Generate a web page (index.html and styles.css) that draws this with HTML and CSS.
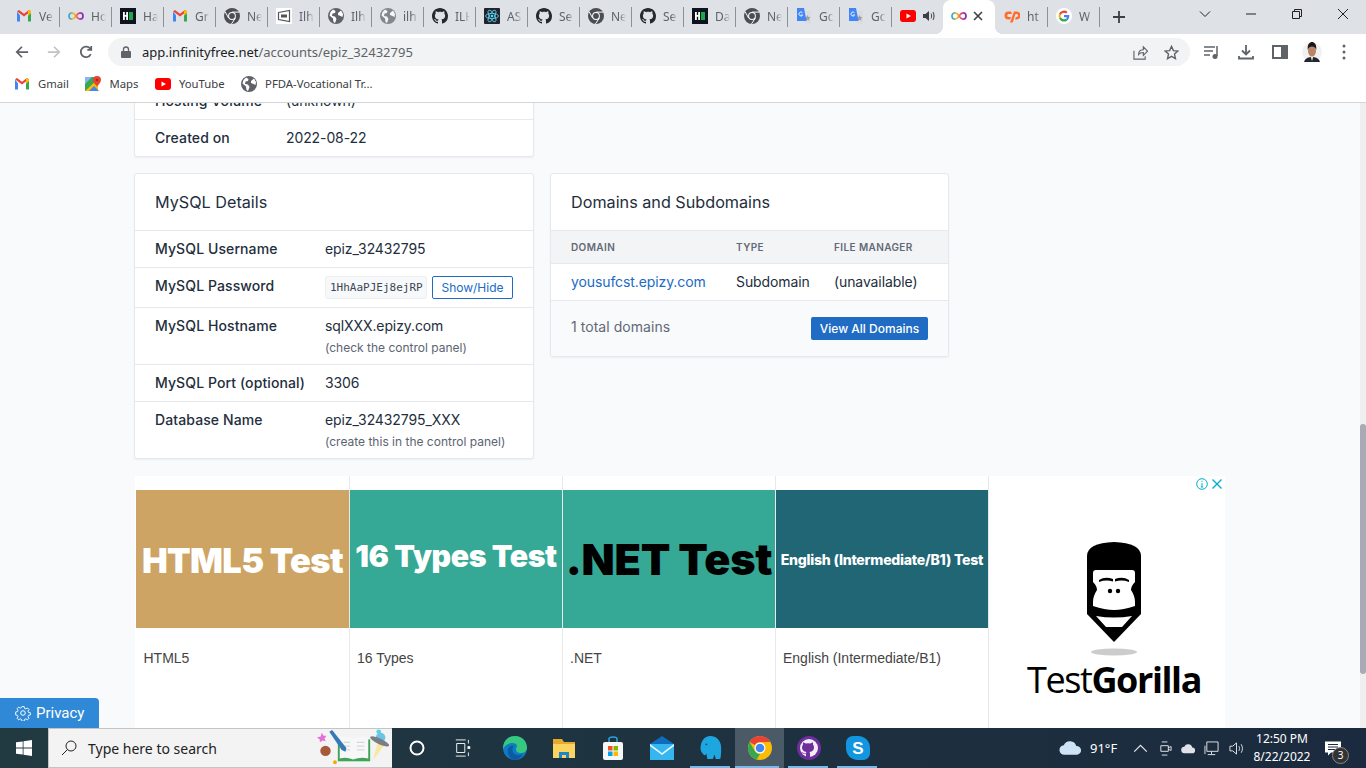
FILE: index.html
```html
<!DOCTYPE html>
<html lang="en">
<head>
    <meta charset="UTF-8">
    <meta name="viewport" content="width=device-width, initial-scale=1.0">
    <title>Account epiz_32432795</title>
    <link rel="stylesheet" href="styles.css">
</head>
<body>
    <!-- Iconos -->
    <svg class="sprite" xmlns="http://www.w3.org/2000/svg">
        <defs>
            <linearGradient id="inf" x1="0" y1="0" x2="1" y2="0">
                <stop offset="0" stop-color="#2aa8e0"/><stop offset=".35" stop-color="#f6c31c"/><stop offset=".65" stop-color="#e8457f"/><stop offset="1" stop-color="#7b2fbe"/>
            </linearGradient>
            <symbol id="gmail" viewBox="0 0 16 16">
                <path d="M1 3.500v10h3V7.200z" fill="#4285f4"/>
                <path d="M12 7.200v6.300h3v-10z" fill="#34a853"/>
                <path d="M1 3.200 8 8.600l7-5.400-2-1.200L8 5.700 3 2z" fill="#ea4335"/>
                <path d="M12 3v4.500l3-2.300V3.200L13.500 2z" fill="#fbbc04"/>
            </symbol>
            <symbol id="infinity" viewBox="0 0 16 16">
                <path d="M8 8C6.500 5.800 5.400 4.900 3.900 4.900 2.200 4.900 1 6.300 1 8s1.200 3.100 2.900 3.100C5.400 11.100 6.500 10.200 8 8c1.500-2.200 2.600-3.100 4.100-3.100C13.800 4.900 15 6.300 15 8s-1.200 3.100-2.900 3.100C10.600 11.100 9.500 10.200 8 8z" fill="none" stroke="url(#inf)" stroke-width="1.700"/>
            </symbol>
            <symbol id="hr" viewBox="0 0 16 16">
                <rect width="16" height="16" fill="#0e141e"/>
                <path d="M3 4h1.800v3h1.400V4H8v8H6.200V8.800H4.800V12H3z" fill="#fff"/>
                <rect x="9" y="4" width="4" height="8" fill="#1ba94c"/>
            </symbol>
            <symbol id="chromedark" viewBox="0 0 16 16">
                <circle cx="8" cy="8" r="8" fill="#4b4e52"/>
                <circle cx="8" cy="8" r="3.900" fill="#fff"/>
                <circle cx="8" cy="8" r="2.900" fill="#4b4e52"/>
                <path d="M8 4.100h7.200M4.600 10 1.300 4M11.400 10 7.500 15.800" stroke="#fff" stroke-width="1"/>
            </symbol>
            <symbol id="boxfav" viewBox="0 0 16 16">
                <rect width="16" height="16" fill="#fff"/>
                <path d="M2.500 4.500 13.500 2.500V13.500L2.500 11.500z" fill="none" stroke="#555" stroke-width="1.200"/>
                <rect x="5" y="6.500" width="6" height="3" fill="#555"/>
            </symbol>
            <symbol id="globe" viewBox="0 0 16 16">
                <circle cx="8" cy="8" r="8" fill="#5f6368"/>
                <path d="M5 1.500 7.500 3 7 5 4.500 5.500 4 8 7 8.500 8.500 11 7 15 5.500 14 5 10.500 1.500 7.500 2.500 4zM10 5l3-2.500L15 6l-.5 3-2-1-2.500-1z" fill="#fff"/>
            </symbol>
            <symbol id="github" viewBox="0 0 16 16">
                <path d="M8 0C3.580 0 0 3.580 0 8c0 3.540 2.290 6.530 5.470 7.590.4.07.55-.17.55-.38 0-.19-.01-.82-.01-1.490-2.010.37-2.530-.49-2.690-.94-.09-.23-.48-.94-.82-1.130-.28-.15-.68-.52-.01-.53.63-.01 1.080.58 1.230.82.72 1.210 1.870.87 2.330.66.07-.52.28-.87.51-1.070-1.780-.2-3.640-.89-3.640-3.950 0-.87.31-1.590.82-2.150-.08-.2-.36-1.020.08-2.120 0 0 .67-.21 2.200.82.64-.18 1.320-.27 2-.27.68 0 1.360.09 2 .27 1.530-1.040 2.200-.82 2.200-.82.44 1.100.16 1.920.08 2.120.51.56.82 1.270.82 2.150 0 3.070-1.870 3.750-3.650 3.950.29.25.54.73.54 1.480 0 1.070-.01 1.930-.01 2.200 0 .21.15.46.55.38A8.013 8.013 0 0016 8c0-4.420-3.580-8-8-8z" fill="#24292f"/>
            </symbol>
            <symbol id="react" viewBox="0 0 16 16">
                <rect width="16" height="16" rx="1" fill="#20232a"/>
                <g fill="none" stroke="#61dafb" stroke-width=".8">
                    <ellipse cx="8" cy="8" rx="6.500" ry="2.600"/>
                    <ellipse cx="8" cy="8" rx="6.500" ry="2.600" transform="rotate(60 8 8)"/>
                    <ellipse cx="8" cy="8" rx="6.500" ry="2.600" transform="rotate(120 8 8)"/>
                </g>
                <circle cx="8" cy="8" r="1.300" fill="#61dafb"/>
            </symbol>
            <symbol id="translate" viewBox="0 0 16 16">
                <path d="M8 3h7v12.500H9z" fill="#dadce0"/>
                <path d="M11.500 7l1 2 2 .3-1.500 1.400.4 2-1.900-1-1.900 1 .4-2L8.500 9.300l2-.3z" fill="#9aa0a6"/>
                <path d="M1 0h7l2.500 13H1z" fill="#4285f4"/>
                <path d="M6.500 4.700A2 2 0 1 0 6.700 7H4.800" fill="none" stroke="#fff" stroke-width=".9"/>
            </symbol>
            <symbol id="youtube" viewBox="0 0 16 12">
                <rect width="16" height="12" rx="3" fill="#f00"/>
                <path d="M6.500 3.500 11 6 6.500 8.500z" fill="#fff"/>
            </symbol>
            <symbol id="speaker" viewBox="0 0 12 12">
                <path d="M0 4h2.500L6 1v10L2.500 8H0z" fill="#3c4043"/>
                <path d="M8 3.500c.9 1.500.9 3.500 0 5M10 2c1.400 2.500 1.400 5.500 0 8" fill="none" stroke="#3c4043"/>
            </symbol>
            <symbol id="cpanel" viewBox="0 0 16 16">
                <path d="M7 3.500H4.500a4 4 0 0 0 0 8H6l1.200-2.500h-2.500a1.500 1.500 0 0 1 0-3H8z" fill="#ff6c2c"/>
                <path d="M6 14.500 10 3.500h2.500a4 4 0 0 1 0 8h-1.500l1-2.500h.6a1.500 1.500 0 0 0 0-3H11.500L8.700 14.500z" fill="#ff6c2c"/>
            </symbol>
            <symbol id="google" viewBox="0 0 16 16">
                <circle cx="8" cy="8" r="8" fill="#fff"/>
                <path d="M13.300 8.100c0-.4 0-.8-.1-1.100H8v2.200h3a2.600 2.600 0 0 1-1.100 1.700l1.700 1.400c1-1 1.700-2.400 1.700-4.200z" fill="#4285f4"/>
                <path d="M8 13.500c1.500 0 2.700-.5 3.600-1.300l-1.700-1.400c-.5.3-1.100.5-1.900.5-1.400 0-2.700-1-3.100-2.300l-1.800 1.400A5.500 5.500 0 0 0 8 13.500z" fill="#34a853"/>
                <path d="M4.900 9a3.300 3.300 0 0 1 0-2.100L3.100 5.500a5.500 5.500 0 0 0 0 4.900z" fill="#fbbc04"/>
                <path d="M8 4.700c.8 0 1.500.3 2.100.8l1.500-1.500A5.500 5.500 0 0 0 3.100 5.500l1.800 1.400C5.300 5.600 6.600 4.700 8 4.700z" fill="#ea4335"/>
            </symbol>
            <symbol id="maps" viewBox="0 0 16 16">
                <rect y="1" width="13" height="14" fill="#34a853"/>
                <path d="M0 15 13 3v12z" fill="#fbbc04"/>
                <path d="M0 1h7L0 8z" fill="#8ab4f8"/>
                <path d="M4 15 9 10l5 5z" fill="#4285f4"/>
                <path d="M12 0a4 4 0 0 0-4 4c0 2.500 4 6.500 4 6.500s4-4 4-6.500a4 4 0 0 0-4-4z" fill="#ea4335"/>
                <circle cx="12" cy="4" r="1.300" fill="#a52714"/>
            </symbol>
            <symbol id="chrome" viewBox="0 0 24 24">
                <circle cx="12" cy="12" r="12" fill="#fbbc04"/>
                <path d="M12 0a12 12 0 0 1 10.400 6H12a6 6 0 0 0-5.200 3L1.600 6A12 12 0 0 1 12 0z" fill="#ea4335"/>
                <path d="M1.600 6 6.800 15a6 6 0 0 0 5.200 3l-3.400 5.500A12 12 0 0 1 1.600 6z" fill="#34a853"/>
                <circle cx="12" cy="12" r="5.500" fill="#fff"/>
                <circle cx="12" cy="12" r="4.300" fill="#4285f4"/>
            </symbol>
        </defs>
    </svg>

    <div class="tabstrip">
        <div class="tab"><svg class="favicon"><use href="#gmail"/></svg><span class="tab-title">Ve</span></div>
        <div class="tab"><svg class="favicon"><use href="#infinity"/></svg><span class="tab-title">Ho</span></div>
        <div class="tab"><svg class="favicon"><use href="#hr"/></svg><span class="tab-title">Ha</span></div>
        <div class="tab"><svg class="favicon"><use href="#gmail"/></svg><span class="tab-title">Gr</span></div>
        <div class="tab"><svg class="favicon"><use href="#chromedark"/></svg><span class="tab-title">Ne</span></div>
        <div class="tab"><svg class="favicon"><use href="#boxfav"/></svg><span class="tab-title">Ilh</span></div>
        <div class="tab"><svg class="favicon"><use href="#globe"/></svg><span class="tab-title">Ilh</span></div>
        <div class="tab"><svg class="favicon faded"><use href="#globe"/></svg><span class="tab-title">ilh</span></div>
        <div class="tab"><svg class="favicon"><use href="#github"/></svg><span class="tab-title">ILH</span></div>
        <div class="tab"><svg class="favicon"><use href="#react"/></svg><span class="tab-title">AS</span></div>
        <div class="tab"><svg class="favicon"><use href="#github"/></svg><span class="tab-title">Se</span></div>
        <div class="tab"><svg class="favicon"><use href="#chromedark"/></svg><span class="tab-title">Ne</span></div>
        <div class="tab"><svg class="favicon"><use href="#github"/></svg><span class="tab-title">Se</span></div>
        <div class="tab"><svg class="favicon"><use href="#hr"/></svg><span class="tab-title">Da</span></div>
        <div class="tab"><svg class="favicon"><use href="#chromedark"/></svg><span class="tab-title">Ne</span></div>
        <div class="tab"><svg class="favicon"><use href="#translate"/></svg><span class="tab-title">Gc</span></div>
        <div class="tab"><svg class="favicon"><use href="#translate"/></svg><span class="tab-title">Gc</span></div>
        <div class="tab tab-audio"><svg class="favicon"><use href="#youtube"/></svg><svg class="tab-speaker"><use href="#speaker"/></svg></div>
        <div class="tab tab-active"><svg class="favicon"><use href="#infinity"/></svg>
            <svg class="tab-close" viewBox="0 0 10 10"><path d="M1 1l8 8M9 1l-8 8"/></svg>
        </div>
        <div class="tab"><svg class="favicon"><use href="#cpanel"/></svg><span class="tab-title">ht</span></div>
        <div class="tab"><svg class="favicon"><use href="#google"/></svg><span class="tab-title">W</span></div>
        <svg class="new-tab" viewBox="0 0 14 14"><path d="M7 1v12M1 7h12"/></svg>
        <div class="window-controls">
            <svg class="win-icon" viewBox="0 0 12 12"><path d="M1 3.500 6 8.500l5-5"/></svg>
            <svg class="win-icon" viewBox="0 0 12 12"><path d="M1 6h10"/></svg>
            <svg class="win-icon" viewBox="0 0 12 12"><path d="M1.500 3.500h7v7h-7zM3.500 3.500v-2h7v7h-2"/></svg>
            <svg class="win-icon" viewBox="0 0 12 12"><path d="M1 1l10 10M11 1 1 11"/></svg>
        </div>
    </div>

    <div class="toolbar">
        <svg class="nav-icon" viewBox="0 0 16 16"><path d="M15 8H2M8 2 2 8l6 6"/></svg>
        <svg class="nav-icon nav-disabled" viewBox="0 0 16 16"><path d="M1 8h13M8 2l6 6-6 6"/></svg>
        <svg class="nav-icon" viewBox="0 0 16 16"><path d="M13.500 10.500A6 6 0 1 1 13 4.500M14 1v4.500H9.500"/></svg>
        <div class="omnibox">
            <svg class="lock" viewBox="0 0 10 12"><path d="M2.500 5V3.500a2.500 2.500 0 0 1 5 0V5" fill="none" stroke="#5f6368" stroke-width="1.300"/><rect y="5" width="10" height="7" rx="1" fill="#5f6368"/></svg>
            <span class="url"><b>app.infinityfree.net</b>/accounts/epiz_32432795</span>
            <svg class="omni-icon share" viewBox="0 0 16 16"><path d="M1 6v9h12v-3M6 10c0-3 2-5 5-5V2l4.500 4.500L11 11V8c-2 0-4 .5-5 2z"/></svg>
            <svg class="omni-icon" viewBox="0 0 16 16"><path d="M8 1.500l2 4.500 4.800.5-3.600 3.200 1 4.800L8 12.100l-4.200 2.400 1-4.800L1.200 6.500 6 6z" stroke-width="1.500"/></svg>
        </div>
        <div class="toolbar-actions">
            <svg class="tool-icon" viewBox="0 0 16 16"><path d="M0 3h11M0 7h9M0 11h6M13 2v10" fill="none" stroke="#5f6368" stroke-width="1.500"/><circle cx="11" cy="12.500" r="2.500" fill="#5f6368"/></svg>
            <svg class="tool-icon" viewBox="0 0 16 16"><path d="M8 1v9M4 6.500 8 10.500l4-4M1 12v2.500h14V12" fill="none" stroke="#5f6368" stroke-width="1.800"/></svg>
            <svg class="tool-icon" viewBox="0 0 16 16"><path d="M1 2h14v12H1z" fill="none" stroke="#5f6368" stroke-width="2"/><rect x="9" y="2" width="6" height="12" fill="#5f6368"/></svg>
            <svg class="avatar" viewBox="0 0 20 20">
                <circle cx="10" cy="10" r="10" fill="#f1f1f1"/>
                <path d="M2 20c1-4 5-5 8-5s7 1 8 5z" fill="#23262b"/>
                <path d="M8.500 14h3l-1.500 5z" fill="#eee"/>
                <ellipse cx="10" cy="9" rx="4" ry="5.500" fill="#b98565"/>
                <path d="M5.800 8C5 2 8 0 10 0s5 2 4.200 8C13.500 5 12 4.500 10 4.500S6.500 5 5.800 8z" fill="#17181b"/>
            </svg>
            <svg class="kebab" viewBox="0 0 4 16"><circle cx="2" cy="2" r="1.500"/><circle cx="2" cy="8" r="1.500"/><circle cx="2" cy="14" r="1.500"/></svg>
        </div>
    </div>

    <div class="bookmarks">
        <div class="bookmark"><svg class="favicon"><use href="#gmail"/></svg>Gmail</div>
        <div class="bookmark"><svg class="favicon"><use href="#maps"/></svg>Maps</div>
        <div class="bookmark"><svg class="favicon"><use href="#youtube"/></svg>YouTube</div>
        <div class="bookmark"><svg class="favicon"><use href="#globe"/></svg>PFDA-Vocational Tr...</div>
    </div>

    <main class="page">
        <div class="content">
            <div class="card card-account">
                <div class="row row-account"><span class="label">Hosting Volume</span><span>(unknown)</span></div>
                <div class="row row-account"><span class="label">Created on</span><span>2022-08-22</span></div>
            </div>

            <div class="columns">
                <div class="card">
                    <h3 class="card-title">MySQL Details</h3>
                    <div class="row row-mysql"><span class="label">MySQL Username</span><span>epiz_32432795</span></div>
                    <div class="row row-mysql row-password">
                        <span class="label">MySQL Password</span>
                        <span class="secret"><code class="code">1HhAaPJEj8ejRP</code><button class="btn-outline">Show/Hide</button></span>
                    </div>
                    <div class="row row-mysql row-hint"><span class="label">MySQL Hostname</span><div>sqlXXX.epizy.com<small class="hint">(check the control panel)</small></div></div>
                    <div class="row row-mysql"><span class="label">MySQL Port (optional)</span><span>3306</span></div>
                    <div class="row row-mysql row-hint"><span class="label">Database Name</span><div>epiz_32432795_XXX<small class="hint">(create this in the control panel)</small></div></div>
                </div>

                <div class="card card-domains">
                    <h3 class="card-title">Domains and Subdomains</h3>
                    <div class="domain-grid domain-head"><span>Domain</span><span>Type</span><span>File Manager</span></div>
                    <div class="domain-grid domain-row"><a class="link">yousufcst.epizy.com</a><span>Subdomain</span><span>(unavailable)</span></div>
                    <div class="card-footer"><span class="muted">1 total domains</span><button class="btn-primary">View All Domains</button></div>
                </div>
            </div>

            <div class="ad">
                <div class="ad-card"><div class="ad-img ad-html">HTML5 Test</div><p class="ad-caption">HTML5</p></div>
                <div class="ad-card"><div class="ad-img ad-types">16 Types Test</div><p class="ad-caption">16 Types</p></div>
                <div class="ad-card"><div class="ad-img ad-net">.NET Test</div><p class="ad-caption">.NET</p></div>
                <div class="ad-card"><div class="ad-img ad-english">English (Intermediate/B1) Test</div><p class="ad-caption">English (Intermediate/B1)</p></div>
                <div class="ad-brand">
                    <div class="ad-marks">
                        <svg class="ad-mark" viewBox="0 0 12 12"><circle cx="6" cy="6" r="5.300"/><path d="M6 5v4M6 2.800v1.200M4.800 9h2.400"/></svg>
                        <svg class="ad-mark" viewBox="0 0 12 12"><path d="M1.500 1.500l9 9M10.500 1.500l-9 9" stroke-width="1.400"/></svg>
                    </div>
                    <svg class="gorilla" viewBox="0 0 54 116">
                        <path d="M0 14Q0 1 27 0q27 1 27 14v58L27 100 0 72z" fill="#000"/>
                        <path d="M9 28H45Q48 28 48 31V40Q44 44 44 48 48 54 48 60V64Q36 68 27 68 18 68 6 64V60Q6 54 10 48 10 44 6 40V31Q6 28 9 28z" fill="#fff"/>
                        <path d="M12 38q6-4 14-1l0 2.500q-7-2-14 .5zM42 38q-6-4-14-1l0 2.500q7-2 14 .5z" fill="#000"/>
                        <circle cx="23" cy="49" r="2.200" fill="#000"/><circle cx="31" cy="49" r="2.200" fill="#000"/>
                        <path d="M9 74q18 3 36 0L35 85H19z" fill="#fff"/>
                        <ellipse cx="27" cy="110" rx="23" ry="3.500" fill="#ccc"/>
                    </svg>
                    <div class="brand-name">Test<b>Gorilla</b></div>
                </div>
            </div>
        </div>
        <div class="scrollbar"><div class="scroll-thumb"></div></div>
        <div class="privacy">
            <svg class="privacy-icon" viewBox="0 0 16 16"><circle cx="8" cy="8" r="2.300"/><path d="M6.800 1h2.400l.4 2 1.400.6 1.700-1.100 1.700 1.700-1.100 1.700.6 1.400 2 .4v2.400l-2 .4-.6 1.400 1.100 1.700-1.700 1.700-1.700-1.100-1.400.6-.4 2H6.800l-.4-2-1.400-.6-1.700 1.100-1.700-1.700 1.100-1.700-.6-1.400-2-.4V6.800l2-.4.6-1.400L1.600 3.300 3.300 1.600 5 2.700 6.400 2z" transform="translate(.6 .6) scale(.93)"/></svg>
            Privacy
        </div>
    </main>

    <footer class="taskbar">
        <div class="start">
            <svg class="win-logo" viewBox="0 0 16 16"><path d="M0 2.300 6.700 1.400V7.600H0zM7.500 1.300 16 0V7.600H7.500zM0 8.400H6.700V14.600L0 13.700zM7.500 8.400H16V16L7.500 14.700z" fill="#fff"/></svg>
        </div>
        <div class="search">
            <svg class="search-icon" viewBox="0 0 16 16"><circle cx="10" cy="6" r="5"/><path d="M6.500 9.500 1 15"/></svg>
            <span>Type here to search</span>
            <svg class="doodle" viewBox="0 0 76 40">
                <path d="M4 4l2 3 3 0-2 3 1 3-3-1-3 2 0-3-3-2 4-1z" fill="#e46fd8"/>
                <circle cx="8" cy="23" r="5.500" fill="#a65a3a"/>
                <circle cx="18" cy="35" r="2" fill="#f5a800"/>
                <circle cx="64" cy="3" r="2.500" fill="#5bd0e0"/>
                <rect x="21" y="11" width="34" height="23" fill="#3fa45a"/>
                <path d="M23 9q7-2 14 1v22q-7-3-14-1zM37 10q8-3 16-1v22q-8-2-16 1z" fill="#f7f7f7"/>
                <path d="M27 14h7M27 18h7M27 22h7M41 14h8M41 18h8M41 22h8" stroke="#c8cdd6"/>
                <path d="M12 3l3-2 15 19-1 4-4-2z" fill="#3679b8"/>
                <path d="M58 33l5-19 7 3z" fill="#f7e8a0"/>
                <circle cx="66" cy="9" r="5" fill="#69c4e8"/>
                <ellipse cx="65" cy="13" rx="11" ry="3" transform="rotate(25 65 13)" fill="#7a7f86"/>
            </svg>
        </div>
        <div class="task-apps">
            <div class="app"><svg class="cortana" viewBox="0 0 16 16"><circle cx="8" cy="8" r="6.500"/></svg></div>
            <div class="app"><svg class="taskview" viewBox="0 0 20 20"><path d="M2 1h11M2 19h11M3 5h9v10H3zM16 1v4M16 15v4"/><rect x="15" y="8" width="3" height="3" fill="#fff" stroke="none"/></svg></div>
            <div class="app">
                <svg class="app-icon" viewBox="0 0 24 24">
                    <circle cx="12" cy="12" r="12" fill="#0f7bc4"/>
                    <path d="M24 12c0 3-3 5-6 5-4 0-5-2-5-4 0-1.500 1-2 1-3 0-2-2-3-5-3-3.500 0-8 3-9 6C0 5 5 0 12 0s12 5 12 12z" fill="#37c77f"/>
                    <path d="M5 13c1-3 4-4 6-3-3 2-2 9 4 9 2 0 4-.5 5-1.500C18 22 15 24 12 24c-5 0-8-6-7-11z" fill="#0c59a4"/>
                </svg>
            </div>
            <div class="app">
                <svg class="app-icon" viewBox="0 0 24 24">
                    <path d="M1 3h9l2 3h11v3H1z" fill="#e8a92f"/><path d="M1 8h22v14H1z" fill="#fbd560"/>
                    <path d="M7 22v-6h10v6h-3v-3h-4v3z" fill="#1e86c8"/>
                </svg>
            </div>
            <div class="app">
                <svg class="app-icon" viewBox="0 0 24 24">
                    <path d="M8 6V3q0-2 4-2t4 2v3" fill="none" stroke="#2aa8e0" stroke-width="1.500"/>
                    <rect x="2" y="6" width="20" height="18" rx="2" fill="#f7f7f7"/>
                    <rect x="7" y="10" width="4.500" height="4.500" fill="#f25022"/><rect x="12.500" y="10" width="4.500" height="4.500" fill="#7fba00"/>
                    <rect x="7" y="15.500" width="4.500" height="4.500" fill="#00a4ef"/><rect x="12.500" y="15.500" width="4.500" height="4.500" fill="#ffb900"/>
                </svg>
            </div>
            <div class="app">
                <svg class="app-icon" viewBox="0 0 24 24">
                    <path d="M12 0 24 8H0z" fill="#0f6cbd"/><rect y="8" width="24" height="16" fill="#35b6ee"/>
                    <path d="M0 8l12 9 12-9v2L12 19 0 10z" fill="#e8f7fd"/>
                </svg>
            </div>
            <div class="app app-open">
                <svg class="app-icon" viewBox="0 0 24 26">
                    <path d="M11 0c7 0 12 5 12 13 0 5 0 8-1 12h-5l-1-5-2 5H8l-1-6c-1 3-3 2-4 0-2-2-3-5-2-9C2 4 6 0 11 0z" fill="#1da6e0"/>
                    <circle cx="7" cy="9" r="1" fill="#0a4f75"/>
                </svg>
            </div>
            <div class="app app-active"><svg class="app-icon" viewBox="0 0 24 24"><use href="#chrome"/></svg></div>
            <div class="app app-open">
                <svg class="app-icon" viewBox="0 0 24 24">
                    <circle cx="12" cy="12" r="12" fill="#6e2e9c"/>
                    <circle cx="12" cy="12" r="9" fill="#f3edf7"/>
                    <path d="M9 21v-3c-3 .5-4-1-4.500-2 1 0 1.500 1 2.500 1.500.7.3 1.500 0 2-.3 0-.5.3-1 .5-1.200-3-.5-4.500-2-4.500-4.500 0-1.200.4-2 1-2.700-.2-.8-.1-1.800.2-2.300 1 0 2 .7 2.600 1.100a8 8 0 0 1 4.400 0c.6-.4 1.600-1.100 2.600-1.100.3.5.4 1.500.2 2.300.6.700 1 1.500 1 2.700 0 2.500-1.500 4-4.500 4.500.4.400.5 1 .5 1.700V21z" fill="#6e2e9c"/>
                </svg>
            </div>
            <div class="app app-open">
                <svg class="app-icon" viewBox="0 0 24 24">
                    <path d="M7 0h5c7 0 12 5 12 12v5c0 4-3 7-7 7h-5C5 24 0 19 0 12V7c0-4 3-7 7-7z" fill="#1296e0"/>
                    <text class="skype-s" x="12" y="18" text-anchor="middle">S</text>
                </svg>
            </div>
        </div>
        <div class="tray">
            <svg class="weather" viewBox="0 0 24 16"><path d="M6 15a5 5 0 0 1-1-10 7 7 0 0 1 13 1 4.500 4.500 0 0 1 1 9z" fill="#cfe3f7"/></svg>
            <span class="temp">91°F</span>
            <svg class="tray-icon chev" viewBox="0 0 12 12"><path d="M1 8.500 6 3.500l5 5"/></svg>
            <svg class="tray-icon" viewBox="0 0 14 16"><path d="M3 1h6M3 15h6M2 5h8v6H2zM10 7l3-1v4l-3-1"/></svg>
            <svg class="tray-icon" viewBox="0 0 16 12"><path d="M4 11a3.500 3.500 0 0 1-.5-7 4.500 4.500 0 0 1 8.500 1 3 3 0 0 1 0 6z" fill="#dfe3e8" stroke="none"/></svg>
            <svg class="tray-icon tray-net" viewBox="0 0 16 16"><path d="M3 1h12v10H3zM1 5v9M8 11v3M4 14.500h8"/></svg>
            <svg class="tray-icon" viewBox="0 0 16 16"><path d="M1 5.500h3L8 2v12L4 10.500H1zM10.500 5.500c1 1.500 1 3.500 0 5M13 3.500c1.800 3 1.800 6 0 9"/></svg>
            <div class="clock"><span>12:50 PM</span><span>8/22/2022</span></div>
            <div class="notify">
                <svg class="notify-icon" viewBox="0 0 16 14"><path d="M0 0h16v11H6l-3 3v-3H0z" fill="#fff"/><path d="M3 3h10M3 5.500h10M3 8h7" stroke="#1c2a3d"/></svg>
                <span class="badge">3</span>
            </div>
        </div>
    </footer>
</body>
</html>
```
FILE: styles.css
```css
/* Estilos generales */
* {
    margin: 0;
    padding: 0;
    box-sizing: border-box;
}

body {
    font-family: 'Inter', sans-serif;
    color: #232e3c;
    display: flex;
    flex-direction: column;
    height: 100vh;
    overflow: hidden;
    background-color: #fff;
}

.sprite {
    position: absolute;
    width: 0;
    height: 0;
}

.favicon {
    width: 16px;
    height: 16px;
    flex-shrink: 0;
}

.faded {
    opacity: 0.7;
}

/* Pestañas */
.tabstrip {
    display: flex;
    height: 34px;
    padding-left: 8px;
    background-color: #dee1e6;
    font-family: 'Noto Sans', sans-serif;
    font-size: 12px;
    color: #5f6368;
}

.tab {
    position: relative;
    display: flex;
    align-items: center;
    gap: 7px;
    width: 52px;
    padding: 0 0 2px 8px;
}

.tab::after {
    content: "";
    position: absolute;
    right: 0;
    top: 7px;
    height: 20px;
    width: 1px;
    background-color: #8e9296;
}

.tab-title {
    width: 15px;
    overflow: hidden;
    white-space: nowrap;
    -webkit-mask-image: linear-gradient(to right, #000 55%, transparent);
    mask-image: linear-gradient(to right, #000 55%, transparent);
}

.tab-speaker {
    width: 12px;
    height: 12px;
}

.tab-audio::after {
    display: none;
}

.tab-active {
    background-color: #fff;
    border-radius: 8px 8px 0 0;
    margin-left: -1px;
    margin-right: 1px;
    padding-left: 8px;
    gap: 6px;
}

.tab-active::before,
.tab-active::after {
    content: "";
    position: absolute;
    top: auto;
    bottom: 0;
    width: 8px;
    height: 8px;
}

.tab-active::before {
    left: -8px;
    background: radial-gradient(circle at 0 0, transparent 8px, #fff 8px);
}

.tab-active::after {
    right: -8px;
    background: radial-gradient(circle at 100% 0, transparent 8px, #fff 8px);
}

.tab-close {
    width: 10px;
    height: 10px;
    fill: none;
    stroke: #3c4043;
    stroke-width: 1.6;
}

.new-tab {
    width: 14px;
    height: 14px;
    margin: 10px 0 0 12px;
    fill: none;
    stroke: #3c4043;
    stroke-width: 1.8;
}

.window-controls {
    display: flex;
    margin-left: auto;
    gap: 34px;
    padding: 8px 17px 0 0;
}

.win-icon {
    width: 12px;
    height: 12px;
    fill: none;
    stroke: #222;
}

/* Barra de direcciones */
.toolbar {
    display: flex;
    align-items: center;
    height: 34px;
    padding: 2px 0 0 15px;
    gap: 18px;
    background-color: #fff;
}

.nav-icon {
    width: 14px;
    height: 14px;
    fill: none;
    stroke: #5f6368;
    stroke-width: 2;
}

.nav-disabled {
    stroke: #c1c3c6;
}

.omnibox {
    display: flex;
    align-items: center;
    width: 1082px;
    height: 28px;
    margin-left: -3px;
    padding: 0 11px 0 13px;
    gap: 11px;
    border-radius: 14px;
    background-color: #f1f3f4;
}

.lock {
    width: 10px;
    height: 12px;
}

.url {
    flex: 1;
    font-family: 'Noto Sans', sans-serif;
    font-size: 13px;
    color: #5f6368;
}

.url b {
    font-weight: 400;
    color: #202124;
}

.omni-icon {
    width: 15px;
    height: 15px;
    fill: none;
    stroke: #5f6368;
    stroke-width: 1.2;
}

.share {
    margin-right: 5px;
}

.toolbar-actions {
    display: flex;
    align-items: center;
    gap: 18px;
    margin-left: -4px;
}

.tool-icon {
    width: 16px;
    height: 16px;
}

.avatar {
    width: 20px;
    height: 20px;
    margin-left: -4px;
}

.kebab {
    width: 4px;
    height: 16px;
    margin-left: 2px;
    fill: #5f6368;
}

/* Marcadores */
.bookmarks {
    display: flex;
    align-items: center;
    height: 35px;
    padding: 0 0 3px 14px;
    gap: 16.5px;
    font-family: 'Noto Sans', sans-serif;
    font-size: 11.3px;
    color: #3c4043;
    border-bottom: 1px solid #d4d5d7;
    background-color: #fff;
}

.bookmark {
    display: flex;
    align-items: center;
    gap: 8px;
}

/* Página */
.page {
    position: relative;
    flex: 1;
    overflow: hidden;
    background-color: #f9fafc;
    font-size: 14px;
    line-height: 17px;
    letter-spacing: -0.1px;
}

.content {
    width: 1091px;
    margin: -21px 0 0 134px;
}

.card {
    background-color: #fff;
    border: 1px solid #e6e8eb;
    border-radius: 3px;
    box-shadow: 0 1px 2px rgba(35, 46, 60, 0.06);
    overflow: hidden;
}

.card-account {
    width: 400px;
    margin-bottom: 16px;
}

.columns {
    display: grid;
    grid-template-columns: 400px 399px;
    align-items: start;
    gap: 16px;
    margin-bottom: 17px;
}

.card-title {
    height: 57px;
    padding: 19px 20px 0;
    font-size: 16.2px;
    line-height: 18px;
    font-weight: 400;
    letter-spacing: 0;
    color: #232e3c;
    border-bottom: 1px solid #e6e8eb;
}

.row {
    display: grid;
    padding: 9px 20px 10px;
    border-bottom: 1px solid #e6e8eb;
}

.row:last-child {
    border-bottom: none;
}

.row-account {
    grid-template-columns: 131px 1fr;
}

.row-mysql {
    grid-template-columns: 170px 1fr;
}

.row-password {
    padding: 8px 20px;
    align-items: start;
}

.row-password .label {
    padding-top: 1px;
}

.row-hint {
    padding-bottom: 8px;
}

.label {
    font-weight: 500;
    letter-spacing: 0.1px;
}

.hint {
    display: block;
    margin-top: 6px;
    font-size: 12px;
    line-height: 16px;
    letter-spacing: 0;
    color: #5b6472;
}

.secret {
    display: flex;
    gap: 5px;
}

.code {
    display: inline-block;
    width: 102px;
    height: 23px;
    padding: 0 4px;
    font-family: 'DejaVu Sans Mono', monospace;
    font-size: 11px;
    line-height: 22px;
    letter-spacing: 0;
    white-space: nowrap;
    color: #3d4654;
    background-color: #f6f8f9;
    border: 1px solid #eceef0;
    border-radius: 3px;
}

.btn-outline {
    width: 81px;
    height: 23px;
    font-family: inherit;
    font-size: 12px;
    color: #206bc4;
    background-color: #fff;
    border: 1px solid #206bc4;
    border-radius: 2px;
}

/* Dominios */
.domain-grid {
    display: grid;
    grid-template-columns: 165px 98px 1fr;
    padding: 0 20px;
    border-bottom: 1px solid #e6e8eb;
}

.domain-head {
    height: 33px;
    align-items: center;
    font-size: 10px;
    font-weight: 600;
    letter-spacing: 0.4px;
    text-transform: uppercase;
    color: #626976;
    background-color: #f3f4f6;
}

.domain-row {
    height: 37px;
    padding-bottom: 1px;
    align-items: center;
}

.link {
    color: #206bc4;
}

.card-footer {
    display: flex;
    justify-content: space-between;
    align-items: center;
    height: 55px;
    padding: 0 20px;
    background-color: #f9fafc;
}

.muted {
    padding-bottom: 5px;
    letter-spacing: 0.05px;
    color: #626976;
}

.btn-primary {
    width: 117px;
    height: 23px;
    font-family: inherit;
    font-size: 12px;
    font-weight: 500;
    color: #fff;
    background-color: #206bc4;
    border: none;
    border-radius: 2px;
}

/* Anuncio */
.ad {
    display: grid;
    grid-template-columns: 215px 213px 213px 213px 1fr;
    height: 260px;
    margin-left: 1px;
    letter-spacing: 0;
    background-color: #fff;
}

.ad-card {
    padding-top: 14px;
    border-right: 1px solid #e8e8e8;
}

.ad-card:first-child {
    padding-left: 1px;
}

.ad-img {
    display: flex;
    align-items: center;
    justify-content: center;
    height: 138px;
    font-weight: 900;
    white-space: nowrap;
    color: #fff;
    overflow: hidden;
}

.ad-html {
    font-size: 34.4px;
    line-height: 1;
    padding-top: 5px;
    letter-spacing: -0.6px;
    background-color: #cda463;
}

.ad-types {
    font-size: 30.3px;
    padding-bottom: 6px;
    letter-spacing: -0.4px;
    background-color: #36a896;
}

.ad-net {
    font-size: 43.2px;
    letter-spacing: -0.3px;
    color: #000;
    background-color: #36a896;
}

.ad-english {
    font-size: 14.1px;
    font-weight: 800;
    letter-spacing: -0.25px;
    background-color: #206675;
}

.ad-caption {
    padding: 22px 8px 0 7px;
    font-family: 'Liberation Sans', sans-serif;
    font-size: 14px;
    color: #444;
}

.ad-card:first-child .ad-caption {
    padding-left: 7.5px;
}

.ad-brand {
    display: flex;
    flex-direction: column;
    align-items: center;
    padding-left: 14px;
}

.ad-marks {
    display: flex;
    align-self: flex-end;
    gap: 3px;
    padding: 1px 2px 0 0;
    height: 66px;
}

.ad-mark {
    width: 12px;
    height: 12px;
    margin-top: 1px;
    fill: none;
    stroke: #00aecd;
}

.gorilla {
    width: 54px;
    height: 116px;
}

.brand-name {
    margin-top: 5px;
    font-family: 'Open Sans', sans-serif;
    font-size: 36px;
    line-height: 34px;
    letter-spacing: -1.4px;
    color: #000;
}

.scrollbar {
    position: absolute;
    right: 0;
    top: 0;
    bottom: 0;
    width: 6px;
    background-color: #efeff0;
}

.scroll-thumb {
    width: 6px;
    height: 250px;
    margin-top: 321px;
    border-radius: 3px;
    background-color: #a8aab5;
}

.privacy {
    position: absolute;
    left: 0;
    bottom: 0;
    display: flex;
    align-items: center;
    gap: 5px;
    width: 99px;
    height: 30px;
    padding-left: 15px;
    font-family: 'Roboto', sans-serif;
    font-size: 15px;
    letter-spacing: 0;
    color: #fff;
    background-color: #3089d6;
    border-radius: 0 4px 0 0;
}

.privacy-icon {
    width: 16px;
    height: 16px;
    fill: none;
    stroke: #fff;
}

/* Barra de tareas */
.taskbar {
    display: flex;
    align-items: stretch;
    height: 40px;
    color: #fff;
    font-family: 'Noto Sans', sans-serif;
    background: linear-gradient(to right, #213a42, #1b2a3e);
}

.start {
    display: flex;
    align-items: center;
    justify-content: center;
    width: 48px;
}

.win-logo {
    width: 16px;
    height: 16px;
}

.search {
    display: flex;
    align-items: center;
    width: 344px;
    padding-left: 12px;
    gap: 11px;
    font-size: 14px;
    color: #222;
    background-color: #f3f3f3;
    border: 1px solid #c4c4c4;
    border-width: 1px 0 1px 1px;
}

.search-icon {
    width: 16px;
    height: 16px;
    fill: none;
    stroke: #222;
}

.doodle {
    width: 76px;
    height: 38px;
    margin-left: auto;
}

.task-apps {
    display: flex;
}

.app {
    position: relative;
    display: flex;
    align-items: center;
    justify-content: center;
    width: 49px;
}

.app-open::after,
.app-active::after {
    content: "";
    position: absolute;
    left: 4px;
    right: 5px;
    bottom: 0;
    height: 2px;
    background-color: #76b9ed;
}

.app-active {
    background-color: #4a5a66;
}

.app-active::after {
    left: 0;
    right: 5px;
}

.app-icon {
    width: 24px;
    height: 24px;
}

.cortana {
    width: 16px;
    height: 16px;
    fill: none;
    stroke: #fff;
    stroke-width: 2;
}

.taskview {
    width: 18px;
    height: 18px;
    margin-right: 5px;
    fill: none;
    stroke: #fff;
}

.skype-s {
    font-family: 'Liberation Sans', sans-serif;
    font-size: 17px;
    font-weight: 700;
    fill: #fff;
}

.tray {
    display: flex;
    align-items: center;
    gap: 8px;
    margin-left: auto;
    font-size: 12px;
}

.weather {
    width: 23px;
    height: 16px;
}

.temp {
    width: 35px;
    font-size: 13px;
}

.tray-icon {
    width: 15px;
    height: 15px;
    fill: none;
    stroke: #e4e7ea;
}

.chev {
    margin-right: 2px;
}

.tray-net {
    margin-right: 2px;
}

.clock {
    display: flex;
    flex-direction: column;
    align-items: center;
    width: 60px;
    font-size: 12px;
    line-height: 18px;
}

.notify {
    position: relative;
    width: 46px;
    padding-left: 5px;
}

.notify-icon {
    display: block;
    width: 16px;
    height: 15px;
}

.badge {
    position: absolute;
    left: 12px;
    top: 6px;
    width: 17px;
    height: 17px;
    font-size: 10px;
    line-height: 15px;
    text-align: center;
    background-color: #333;
    border: 1px solid #888;
    border-radius: 50%;
}
```
